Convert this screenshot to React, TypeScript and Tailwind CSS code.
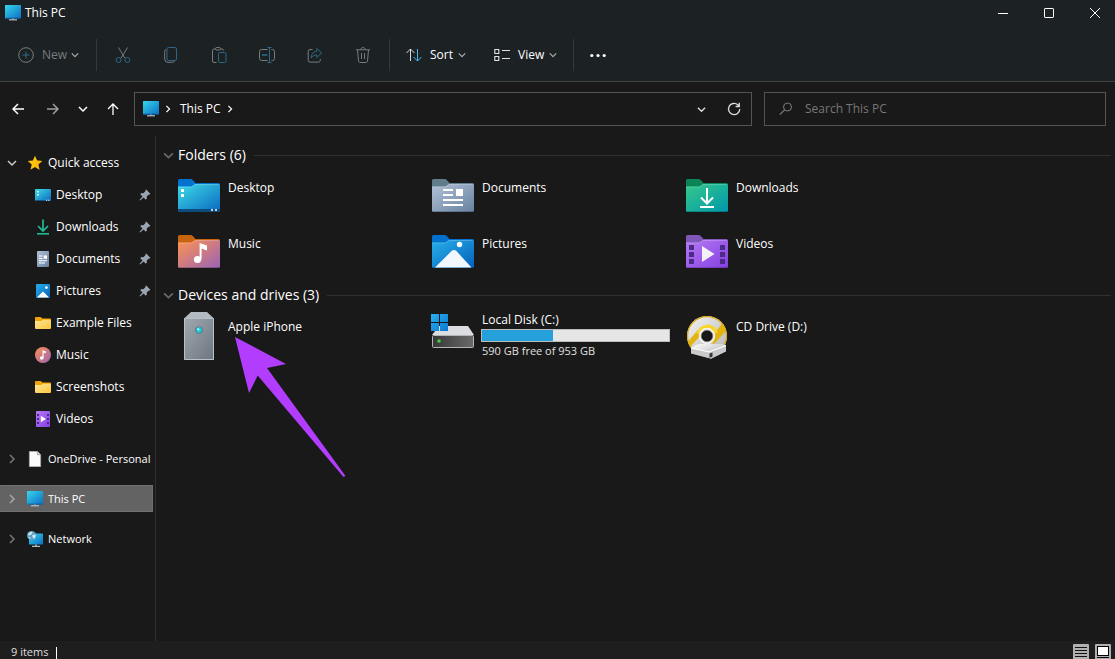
import type { ReactNode } from "react";

const gradients: [string, string, string][] = [
  ["g-screen", "#37d5ea", "#0b6fc6"],
  ["g-desktop", "#3ddbe8", "#0b68c0"],
  ["g-docs", "#b3c2d6", "#66819f"],
  ["g-down", "#35c98a", "#0097ab"],
  ["g-music", "#ff9350", "#9a63b6"],
  ["g-pics", "#27b0ea", "#0560ba"],
  ["g-video", "#b679f4", "#8440e2"],
  ["g-yellow", "#ffe69a", "#fcc63c"],
  ["g-phone", "#a0a8b0", "#6d767e"],
  ["g-win", "#28aff0", "#0b78d2"],
  ["g-disc", "#f4f4f4", "#b4b4b6"],
  ["g-tray", "#ffffff", "#a9a9ad"],
];

function GradientDefs() {
  return (
    <svg className="absolute h-0 w-0" aria-hidden="true">
      <defs>
        {gradients.map(([id, from, to]) => (
          <linearGradient key={id} id={id} x1="0" y1="0" x2="1" y2="1">
            <stop offset="0" stopColor={from} />
            <stop offset="1" stopColor={to} />
          </linearGradient>
        ))}
        <linearGradient id="g-drive" x1="0" y1="0" x2="1" y2="0">
          <stop offset="0" stopColor="#383838" />
          <stop offset="1" stopColor="#6a6a6a" />
        </linearGradient>
      </defs>
    </svg>
  );
}

function Small({ children }: { children: ReactNode }) {
  return (
    <svg className="h-4 w-4 shrink-0" viewBox="0 0 16 16" fill="none" aria-hidden="true">
      {children}
    </svg>
  );
}

function Large({ children }: { children: ReactNode }) {
  return (
    <svg className="h-12 w-12 shrink-0" viewBox="0 0 48 48" fill="none" aria-hidden="true">
      {children}
    </svg>
  );
}

const MonitorIcon = () => (
  <Small>
    <rect x="0" y="0" width="16" height="13.5" rx="0.6" fill="url(#g-screen)" />
    <path d="M0.4 13.1h15.2" stroke="#0a5796" strokeWidth="0.8" />
    <path d="M7 13.5h2v1H7z" fill="#8d979e" />
    <path d="M4 14.2h8v1.2H4z" fill="#b9c0c5" />
  </Small>
);

const NetworkIcon = () => (
  <Small>
    <rect x="2" y="2.5" width="14" height="11" rx="0.6" fill="url(#g-screen)" />
    <path d="M8 13.5h2v1.5H8z" fill="#8d979e" />
    <path d="M5 14.8h8v1.2H5z" fill="#b9c0c5" />
    <circle cx="4.6" cy="4.6" r="4.6" fill="#5b9fc4" />
    <path d="M1 3.4C1.800 1.500 3.400.600 5 .700L5.600 2 4.200 3.400 2.600 4.400 1.600 4.200zM5.200 4.200L8.300 3.200c.500 1.300.400 2.900-.400 4L6.500 7.600 5.600 6.200zM1.200 5.800l2 .600.500 1.700C2.400 7.900 1.500 7 1.200 5.800z" fill="#cfe6f2" />
  </Small>
);

const StarIcon = () => (
  <Small>
    <path d="M8 .8l2.1 4.8 5.1.5-3.9 3.5 1.2 5.2L8 12.1l-4.5 2.7 1.2-5.2L.8 6.1l5.1-.5z" fill="#ffc20e" />
    <path d="M8 12.1l4.5 2.7-1.2-5.2 3.9-3.5-5.1-.5z" fill="#ffad0a" fillOpacity="0.5" />
  </Small>
);

const DesktopSmall = () => (
  <Small>
    <rect x="0" y="2" width="16" height="12" rx="1" fill="url(#g-desktop)" />
    <path d="M0 13h16a1 1 0 0 1-1 1H1a1 1 0 0 1-1-1z" fill="#0c5687" />
    <path d="M2.2 4h1.6v1.6H2.2zM2.2 7h1.6v1.6H2.2zM11 12.8h1.2v1H11zM13.2 12.8h1.2v1h-1.2z" fill="#fff" />
  </Small>
);

const DownloadSmall = () => (
  <Small>
    <path d="M8 .5v11M3 7l5 5 5-5" stroke="#26b995" strokeWidth="1.7" />
    <path d="M2 14.8h12" stroke="#20b48c" strokeWidth="1.7" />
  </Small>
);

const DocumentSmall = () => (
  <Small>
    <rect x="2" y="0" width="12" height="16" rx="1" fill="url(#g-docs)" />
    <path d="M4 5h3.5M4 7.500h3.500M4 9.700h8M4 12h6" stroke="#fff" strokeWidth="1.1" />
    <path d="M8.7 4.4h3.3v3.4H8.7z" fill="#fff" />
  </Small>
);

const PictureSmall = () => (
  <Small>
    <rect x="1" y="1" width="14" height="14" rx="1" fill="url(#g-pics)" />
    <path d="M2 14.4l5.1-5.2c.5-.5 1.3-.5 1.8 0l5.1 5.2z" fill="#fff" />
    <circle cx="11.4" cy="4.6" r="1.4" fill="#fff" />
  </Small>
);

const FolderSmall = () => (
  <Small>
    <path d="M0 2.8A.8.8 0 0 1 .8 2h4.4c.5 0 .8.2 1.1.5L7.5 3.6H15a1 1 0 0 1 1 1V8H0z" fill="#f0a30a" />
    <path d="M0 6h5.6c.6 0 1-.2 1.4-.5L7.800 4.700H15a1 1 0 0 1 1 1V13a1 1 0 0 1-1 1H1a1 1 0 0 1-1-1z" fill="url(#g-yellow)" />
  </Small>
);

const MusicSmall = () => (
  <Small>
    <circle cx="8" cy="8" r="8" fill="url(#g-music)" />
    <circle cx="6.7" cy="11" r="1.8" fill="#fff" />
    <path d="M7.5 11V3.2l3.3 1.100v2L8.600 5.600V11z" fill="#fff" />
  </Small>
);

const VideoSmall = () => (
  <Small>
    <rect x="1" y="0" width="14" height="16" rx="1" fill="url(#g-video)" />
    <path d="M2 3h2v2H2zM2 7h2v2H2zM2 11h2v2H2zM12 3h2v2h-2zM12 7h2v2h-2zM12 11h2v2h-2z" fill="#4b2591" />
    <path d="M5.800 4.700l5.200 3.300-5.200 3.300z" fill="#fff" />
  </Small>
);

const FileSmall = () => (
  <Small>
    <path d="M2.300.300h8l3.400 3.400v12H2.300z" fill="#fafafa" stroke="#9a9a9a" strokeWidth="0.6" />
    <path d="M10.300.300v3.400h3.400" fill="#d8d8d8" stroke="#8a8a8a" strokeWidth="0.7" />
  </Small>
);

const PinIcon = () => (
  <svg className="h-3 w-3 shrink-0" viewBox="0 0 12 12" aria-label="Pinned">
    <path d="M7.200.600l4.200 4.200-.900.900-.800-.100-2 2.100.200 1.900-1.100 1.100L4.600 8.500 1.200 11.400.600 10.800l2.900-3.400L1.300 5.200l1.100-1.100 1.900.200 2.100-2-.100-.800z" fill="#9aa5af" />
  </svg>
);

type ChevronProps = { dir: "down" | "right"; className: string };

function Chevron({ dir, className }: ChevronProps) {
  return (
    <svg className={"shrink-0 " + className} viewBox="0 0 10 10" fill="none" aria-hidden="true">
      <path d={dir === "down" ? "M1 3l4 4 4-4" : "M3 1l4 4-4 4"} stroke="currentColor" strokeWidth="1.5" />
    </svg>
  );
}

function FolderLarge({ tab, fill, children }: { tab: string; fill: string; children: ReactNode }) {
  return (
    <Large>
      <path d="M3 8.500A1.500 1.500 0 0 1 4.500 7h10.700c1.200 0 2 .4 2.800 1.200L20.500 11h23a1.500 1.500 0 0 1 1.500 1.500V22H3z" fill={tab} />
      <path d="M3 14.500h12.500c1 0 1.800-.4 2.500-1l.8-.7c.6-.5 1.200-.8 2-.8h22.700a1.500 1.500 0 0 1 1.500 1.500v25a1.500 1.500 0 0 1-1.500 1.500h-39A1.500 1.500 0 0 1 3 38.500z" fill={fill} />
      <path d="M3.500 15h12c1 0 1.800-.4 2.500-1l.8-.7c.6-.5 1.200-.8 2-.8h23" stroke="#fff" strokeOpacity="0.25" strokeWidth="0.8" />
      <path d="M3.500 39.500h41" stroke="#000" strokeOpacity="0.2" />
      {children}
    </Large>
  );
}

const folders: { name: string; icon: ReactNode }[] = [
  {
    name: "Desktop",
    icon: (
      <FolderLarge tab="#0372cf" fill="url(#g-desktop)">
        <path d="M3 37h42v1.500a1.500 1.500 0 0 1-1.500 1.500h-39A1.500 1.500 0 0 1 3 38.500z" fill="#0d4c7d" />
        <path d="M6 17h3v3H6zM6 22h3v3H6z" fill="#fff" />
        <path d="M36 37h2v2h-2zM40 37h2v2h-2z" fill="#bcd6ea" />
      </FolderLarge>
    ),
  },
  {
    name: "Documents",
    icon: (
      <FolderLarge tab="#607d8b" fill="url(#g-docs)">
        <path d="M14 18h10M14 23h10M14 28h20M14 33h20" stroke="#fff" strokeWidth="2" />
        <path d="M27 17h7v7h-7z" fill="#fff" />
      </FolderLarge>
    ),
  },
  {
    name: "Downloads",
    icon: (
      <FolderLarge tab="#0b8457" fill="url(#g-down)">
        <path d="M24 16v15M18 25.500l6 6 6-6M17 35h14" stroke="#fff" strokeWidth="2" />
      </FolderLarge>
    ),
  },
  {
    name: "Music",
    icon: (
      <FolderLarge tab="#c8640e" fill="url(#g-music)">
        <circle cx="22.500" cy="31.500" r="3.600" fill="#fff" />
        <path d="M24.600 31.500V15l7.400 2.500v5L26.600 20.500v11z" fill="#fff" />
      </FolderLarge>
    ),
  },
  {
    name: "Pictures",
    icon: (
      <FolderLarge tab="#0372cf" fill="url(#g-pics)">
        <path d="M6 39.500l16.500-16.400c1.500-1.400 3.400-1.400 4.900 0L42.500 39.500z" fill="#f3f8fe" />
        <circle cx="30.500" cy="16.500" r="2.700" fill="#fff" />
      </FolderLarge>
    ),
  },
  {
    name: "Videos",
    icon: (
      <FolderLarge tab="#7f57b9" fill="url(#g-video)">
        <path d="M6 17h5v5H6zM6 24h5v5H6zM6 31h5v5H6zM37 17h5v5h-5zM37 24h5v5h-5zM37 31h5v5h-5z" fill="#4b2b86" />
        <path d="M19 18l12.500 8L19 34z" fill="#f4f2f6" />
      </FolderLarge>
    ),
  },
];

const PhoneIcon = () => (
  <Large>
    <path d="M9 6.500L16 0h16l7 6.500z" fill="#b3bac1" />
    <path d="M9 6h30v42H9z" fill="url(#g-phone)" />
    <path d="M9.500 6.500h29v41h-29z" stroke="#b9c0c6" />
    <circle cx="24" cy="18" r="3.600" fill="#566570" />
    <circle cx="24" cy="18" r="2.900" fill="#1fc9dc" />
    <circle cx="23.200" cy="17.200" r="1.200" fill="#8bf1f8" />
  </Large>
);

const DriveIcon = () => (
  <Large>
    <path d="M10 14h29l6 9H3z" fill="#dcdde1" />
    <rect x="3.500" y="23.500" width="41" height="12" rx="1" fill="url(#g-drive)" stroke="#b4b4b4" />
    <circle cx="10" cy="29" r="1.800" fill="#3cd53c" />
    <path d="M2 2h8v8H2zM11 2h8v8h-8zM2 11h8v8H2zM11 11h8v8h-8z" fill="url(#g-win)" />
  </Large>
);

const DiscIcon = () => (
  <Large>
    <circle cx="24" cy="24" r="20" fill="url(#g-disc)" />
    <circle cx="24" cy="24" r="19.400" stroke="#dcae1c" strokeWidth="1.200" />
    <path d="M39 11.500A20 20 0 0 1 43 19L31 32l-5-3zM5 29.500L15 18l4 4-12 13z" fill="#e3b310" />
    <path d="M13.500 22c1.500-6.500 7.500-10.500 13.500-9 4 1 6.800 3.600 8 7l-4.600 2.500L24 17.500l-6 4z" fill="#fad525" />
    <circle cx="24" cy="24" r="8.200" fill="#f3f3f3" />
    <circle cx="24" cy="24" r="5.800" fill="#181818" stroke="#777" strokeWidth="0.800" />
    <path d="M8 36l7-4h23l5 1v6l-15 7.500L8 41z" fill="url(#g-tray)" />
    <path d="M8 36l18 4 17-6.500v6l-15 7.300L8 41.500z" fill="#c9c9cc" />
    <path d="M8 36l18 4 17-6.500" stroke="#fff" strokeWidth="1.200" />
    <path d="M26.500 41.500l3-1v4.300l-3 1z" fill="#33383a" />
  </Large>
);

const quick: { name: string; icon: ReactNode; pinned?: boolean }[] = [
  { name: "Desktop", icon: <DesktopSmall />, pinned: true },
  { name: "Downloads", icon: <DownloadSmall />, pinned: true },
  { name: "Documents", icon: <DocumentSmall />, pinned: true },
  { name: "Pictures", icon: <PictureSmall />, pinned: true },
  { name: "Example Files", icon: <FolderSmall /> },
  { name: "Music", icon: <MusicSmall /> },
  { name: "Screenshots", icon: <FolderSmall /> },
  { name: "Videos", icon: <VideoSmall /> },
];

const roots: { name: string; icon: ReactNode; selected?: boolean }[] = [
  { name: "OneDrive - Personal", icon: <FileSmall /> },
  { name: "This PC", icon: <MonitorIcon />, selected: true },
  { name: "Network", icon: <NetworkIcon /> },
];

const gray = "#777c7e";
const blue = "#2e6684";

const tools: { name: string; icon: ReactNode }[] = [
  {
    name: "Cut",
    icon: (
      <Small>
        <path d="M3.500 0.500l6.300 10.500M12.500 0.500L6.200 11" stroke={gray} />
        <circle cx="3.600" cy="13" r="2.500" stroke={blue} />
        <circle cx="12.400" cy="13" r="2.500" stroke={blue} />
      </Small>
    ),
  },
  {
    name: "Copy",
    icon: (
      <Small>
        <path d="M3 2.500c-.9.200-1.300.9-1.300 1.700V12a3.300 3.300 0 0 0 3.300 3.300h4.500c.9 0 1.600-.5 1.900-1.300" stroke={gray} />
        <rect x="4" y="0.500" width="9.500" height="13" rx="1.600" stroke={blue} />
      </Small>
    ),
  },
  {
    name: "Paste",
    icon: (
      <Small>
        <path d="M5.500 15.500H3A1.500 1.500 0 0 1 1.500 14V3.500A1.500 1.500 0 0 1 3 2h1.500M9.500 2H11a1.500 1.500 0 0 1 1.500 1.500" stroke={gray} />
        <rect x="4.500" y="0.500" width="5" height="2.500" rx="1.200" stroke={gray} />
        <rect x="7.500" y="5.500" width="7.500" height="10" rx="1.300" stroke={blue} />
      </Small>
    ),
  },
  {
    name: "Rename",
    icon: (
      <Small>
        <path d="M8.500 2.500h-6A2 2 0 0 0 .5 4.500v7a2 2 0 0 0 2 2h6M12.500 2.500h1a2 2 0 0 1 2 2v7a2 2 0 0 1-2 2h-1" stroke={gray} />
        <path d="M10.500.5v15M8.500.5h4M8.500 15.500h4" stroke={blue} />
        <path d="M3 8h5.500" stroke={blue} strokeWidth="1.600" />
      </Small>
    ),
  },
  {
    name: "Share",
    icon: (
      <Small>
        <path d="M5.500 2.500H3A1.800 1.800 0 0 0 1.200 4.300v9A1.800 1.800 0 0 0 3 15.100h8.500a1.800 1.800 0 0 0 1.800-1.800V12" stroke={gray} />
        <path d="M9.800 1.500l5 4.500-5 4.500V8C7.300 8 5.500 9 4 11c.2-3.800 2.300-6.400 5.800-6.800z" stroke={blue} strokeLinejoin="round" />
      </Small>
    ),
  },
  {
    name: "Delete",
    icon: (
      <Small>
        <path d="M1 2.800h14M5.800 2.800c0-1.500 1-2.300 2.200-2.300s2.200.8 2.200 2.300M2.500 2.800l1 11.200c.1.900.8 1.500 1.600 1.500h5.800c.8 0 1.500-.6 1.600-1.500l1-11.200M6.500 6v6M9.500 6v6" stroke={gray} />
      </Small>
    ),
  },
];

const Separator = () => <div className="h-8 w-px shrink-0 bg-[#35393b]" />;

function TitleBar() {
  return (
    <div className="flex h-[25px] items-center justify-between pl-[5px]">
      <div className="flex items-center gap-1">
        <MonitorIcon />
        <h1>This PC</h1>
      </div>
      <div className="flex gap-[6px]">
        <button aria-label="Minimize" className="flex h-6 w-10 items-center justify-center">
          <svg className="h-[10px] w-[10px]" viewBox="0 0 10 10"><path d="M0 5.500h10" stroke="#fff" /></svg>
        </button>
        <button aria-label="Maximize" className="flex h-6 w-10 items-center justify-center">
          <svg className="h-[10px] w-[10px]" viewBox="0 0 10 10" fill="none"><rect x="0.500" y="0.500" width="9" height="9" rx="0.600" stroke="#fff" /></svg>
        </button>
        <button aria-label="Close" className="flex h-6 w-10 items-center justify-center">
          <svg className="h-[10px] w-[10px]" viewBox="0 0 10 10"><path d="M0 0l10 10M10 0L0 10" stroke="#fff" /></svg>
        </button>
      </div>
    </div>
  );
}

function Toolbar() {
  return (
    <div className="flex h-14 items-center pt-1" role="toolbar" aria-label="Commands">
      <button disabled className="flex w-24 items-center gap-2 pl-[18px] text-[#777c7e]">
        <Small>
          <circle cx="8" cy="8" r="7.300" stroke={gray} />
          <path d="M8 4.500v7M4.500 8h7" stroke={blue} />
        </Small>
        <span>New</span>
        <Chevron dir="down" className="-ml-1 h-2 w-2 text-[#a8acae]" />
      </button>
      <Separator />
      <div className="flex gap-8 px-[18px]">
        {tools.map((t) => (
          <button key={t.name} disabled aria-label={t.name}>{t.icon}</button>
        ))}
      </div>
      <Separator />
      <button className="flex w-[88px] items-center pl-4">
        <Small>
          <path d="M4.500 14V2M.5 6l4-4 4 4" stroke="#d6d8d9" />
          <path d="M11.500 2v12M7.500 10l4 4 4-4" stroke="#4cb5ee" />
        </Small>
        <span className="mr-[5px] ml-2">Sort</span>
        <Chevron dir="down" className="h-2 w-2 text-[#a8acae]" />
      </button>
      <button className="flex w-[95px] items-center pl-4">
        <Small>
          <path d="M.8 2.500h4v4h-4zM.8 9.500h4v4h-4zM8 3.500h8M8 11.500h8" stroke="#e2e4e5" strokeWidth="1.100" />
        </Small>
        <span className="mr-[5px] ml-2">View</span>
        <Chevron dir="down" className="h-2 w-2 text-[#a8acae]" />
      </button>
      <Separator />
      <button aria-label="See more" className="ml-4">
        <Small>
          <circle cx="1.800" cy="8.500" r="1.600" fill="#fff" />
          <circle cx="8" cy="8.500" r="1.600" fill="#fff" />
          <circle cx="14.200" cy="8.500" r="1.600" fill="#fff" />
        </Small>
      </button>
    </div>
  );
}

function NavBar() {
  return (
    <div className="flex items-center py-[10px] pr-[9px]">
      <button aria-label="Back" className="flex w-9 justify-center">
        <svg className="h-3 w-3" viewBox="0 0 12 12" fill="none"><path d="M12 6H1M6 1L1 6l5 5" stroke="#fff" strokeWidth="1.500" /></svg>
      </button>
      <button aria-label="Forward" className="flex w-[34px] justify-center">
        <svg className="h-3 w-3" viewBox="0 0 12 12" fill="none"><path d="M0 6h11M6 1l5 5-5 5" stroke="#a0a0a0" strokeWidth="1.500" /></svg>
      </button>
      <button aria-label="Recent locations" className="flex w-[26px] justify-center">
        <Chevron dir="down" className="h-[10px] w-[10px] text-white" />
      </button>
      <button aria-label="Up" className="flex w-[34px] justify-center">
        <svg className="h-3 w-3" viewBox="0 0 12 12" fill="none"><path d="M6 12V1M1 6l5-5 5 5" stroke="#fff" strokeWidth="1.300" /></svg>
      </button>
      <div className="ml-1 flex h-[34px] flex-1 items-center border border-[#545454] pr-[10px] pl-2">
        <MonitorIcon />
        <Chevron dir="right" className="mx-1 h-2 w-[10px] text-white" />
        <a href="#this-pc" className="ml-[3px]">This PC</a>
        <Chevron dir="right" className="ml-1 h-2 w-[10px] text-white" />
        <button aria-label="Previous locations" className="mr-[21px] ml-auto">
          <Chevron dir="down" className="h-[9px] w-[9px] text-[#dcdcdc]" />
        </button>
        <button aria-label="Refresh">
          <svg className="h-[14px] w-[14px]" viewBox="0 0 14 14" fill="none">
            <path d="M12.700 7A5.600 5.600 0 1 1 10.800 2.800L12.200 4.200M12.300.8v3.700H8.600" stroke="#dcdcdc" strokeWidth="1.300" />
          </svg>
        </button>
      </div>
      <label className="ml-3 flex h-[34px] w-[342px] items-center gap-3 border border-[#545454] pl-[14px]">
        <svg className="h-[14px] w-[14px] shrink-0" viewBox="0 0 14 14" fill="none" aria-hidden="true">
          <circle cx="8.500" cy="5" r="4" stroke="#7d7d7d" />
          <path d="M5.600 7.900L.8 12.700" stroke="#7d7d7d" strokeWidth="1.200" />
        </svg>
        <input type="search" aria-label="Search This PC" placeholder="Search This PC" className="min-w-0 flex-1 bg-transparent outline-none placeholder:text-[#777777]" />
      </label>
    </div>
  );
}

function Sidebar() {
  return (
    <nav aria-label="Locations" className="flex w-[156px] shrink-0 flex-col border-r border-[#303030] pt-[11px] whitespace-nowrap">
      <button aria-expanded="true" className="flex h-8 items-center pl-[7px]">
        <Chevron dir="down" className="h-[10px] w-[10px] text-[#c8c8c8]" />
        <span className="mr-[5px] ml-[10px]"><StarIcon /></span>
        Quick access
      </button>
      <ul>
        {quick.map((q) => (
          <li key={q.name}>
            <a href="#folder" className="flex h-8 items-center gap-[5px] pr-1 pl-[35px]">
              {q.icon}
              <span className="flex-1">{q.name}</span>
              {q.pinned && <PinIcon />}
            </a>
          </li>
        ))}
      </ul>
      <ul className="mt-[10px] flex flex-col gap-[13px] pr-[2px] text-[11px]">
        {roots.map((r) => (
          <li key={r.name}>
            <a
              href="#location"
              className={
                "flex h-[27px] items-center border pl-[6px] " +
                (r.selected ? "border-[#707070] border-l-transparent bg-[#636363]" : "border-transparent")
              }
            >
              <Chevron dir="right" className={"h-[10px] w-[10px] " + (r.selected ? "text-[#a6a6a6]" : "text-[#777777]")} />
              <span className="mr-[5px] ml-[10px]">{r.icon}</span>
              {r.name}
            </a>
          </li>
        ))}
      </ul>
    </nav>
  );
}

function Group({ title, children }: { title: string; children: ReactNode }) {
  return (
    <section>
      <div className="mb-[6px] flex h-[22px] items-center pr-1 pl-[7px]">
        <Chevron dir="down" className="h-[11px] w-[11px] text-[#6a6a6a]" />
        <h2 className="ml-1 text-[14px] leading-[22px]">{title}</h2>
        <div className="ml-2 h-px flex-1 bg-[#303030]" />
      </div>
      <div className="grid grid-cols-[repeat(auto-fill,254px)] pl-[19px]">{children}</div>
    </section>
  );
}

export default function App() {
  return (
    <div className="flex h-screen flex-col overflow-hidden bg-[#191919] font-['Open_Sans','Noto_Sans',sans-serif] text-[12px] leading-4 text-white">
      <GradientDefs />
      <header className="shrink-0 border-b border-[#404244] bg-[#1c2224]">
        <TitleBar />
        <Toolbar />
      </header>
      <NavBar />
      <div className="flex min-h-0 flex-1">
        <Sidebar />
        <main className="relative min-w-0 flex-1 pt-2">
          <Group title="Folders (6)">
            {folders.map((f) => (
              <a key={f.name} href="#folder" className="flex h-14 gap-[5px]">
                {f.icon}
                <span className="pt-2">{f.name}</span>
              </a>
            ))}
          </Group>
          <Group title="Devices and drives (3)">
            <a href="#iphone" className="flex h-14 gap-[5px]">
              <PhoneIcon />
              <span className="pt-[7px]">Apple iPhone</span>
            </a>
            <a href="#local-disk" className="flex h-14 gap-1">
              <DriveIcon />
              <div>
                <p className="pl-px">Local Disk (C:)</p>
                <div role="meter" aria-label="Space used" aria-valuemin={0} aria-valuemax={953} aria-valuenow={363} className="my-px h-[13px] w-[189px] border border-[#bcbcbc] bg-[#e6e6e6]">
                  <div className="h-full bg-[#26a0da]" style={{ width: `${(363 / 953) * 100}%` }} />
                </div>
                <p className="pl-px text-[11px] text-[#e0e0e0]">590 GB free of 953 GB</p>
              </div>
            </a>
            <a href="#cd-drive" className="flex h-14 gap-[5px]">
              <DiscIcon />
              <span className="pt-[7px]">CD Drive (D:)</span>
            </a>
          </Group>
          <svg className="pointer-events-none absolute top-[201px] left-[79px] h-[141px] w-[112px]" viewBox="0 0 112 141" aria-hidden="true">
            <path d="M0 0L51 27 32 31 110.500 139 108.500 140 22.700 38.500 14 56z" fill="#b33dff" />
          </svg>
        </main>
      </div>
      <footer className="flex h-[18px] shrink-0 items-start justify-between bg-[#1e1e1e] pr-1 pl-[11px]">
        <div className="flex gap-2 pt-1">
          <span className="text-[11px] leading-[14px] text-[#dedede]">9 items</span>
          <div className="mt-[2px] h-3 w-px bg-white" />
        </div>
        <div className="flex gap-[6px] pt-[3px]">
          <button aria-label="Details view">
            <Small>
              <rect width="16" height="16" rx="1" fill="#b0b0b0" />
              <path d="M2 3.500h12M2 6.500h12M2 9.500h12M2 12.500h12" stroke="#111" />
            </Small>
          </button>
          <button aria-label="Large icons view">
            <Small>
              <rect width="16" height="16" rx="1" fill="#b0b0b0" />
              <rect x="2.500" y="2.500" width="11" height="9" fill="#fff" stroke="#000" />
              <path d="M2 13.500h12" stroke="#000" />
            </Small>
          </button>
        </div>
      </footer>
    </div>
  );
}
